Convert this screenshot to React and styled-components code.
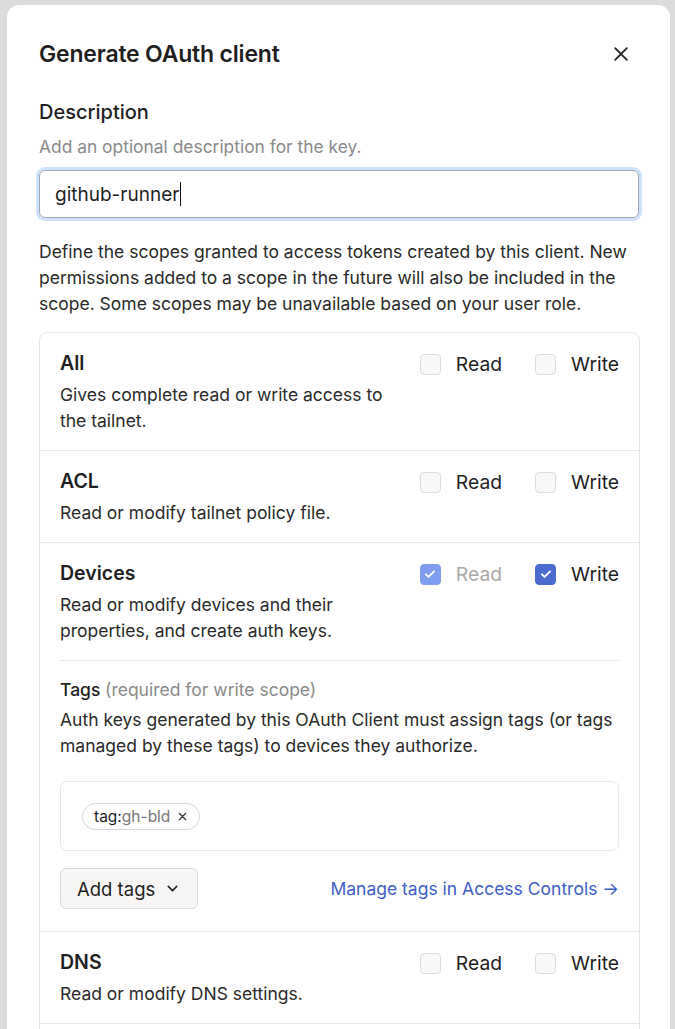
import React from "react";
import styled, { createGlobalStyle } from "styled-components";

const Global = createGlobalStyle`
  html, body {
    margin: 0;
    padding: 0;
    background: #dcdcdc;
    font-family: Inter, "Noto Sans", "Liberation Sans", sans-serif;
    color: #1f1f1f;
    overflow: hidden;
  }
  * { box-sizing: border-box; }
`;

const Page = styled.div`
  height: 1029px;
  overflow: hidden;
  padding: 5px 5px 0 7px;
`;

const Modal = styled.div`
  width: 663px;
  background: #fff;
  border-radius: 12px;
  padding: 30px 31px 0 32px;
`;

const Header = styled.div`
  display: flex;
  justify-content: space-between;
  align-items: center;
  height: 38px;
`;

const Title = styled.h2`
  margin: 0;
  font-size: 23px;
  font-weight: 600;
  letter-spacing: -0.2px;
`;

const Close = styled.button`
  border: 0;
  background: none;
  padding: 0;
  margin-right: 8px;
  display: flex;
  cursor: pointer;
  color: #222;
`;

const Label = styled.div`
  margin-top: 25px;
  font-size: 20px;
  font-weight: 500;
  line-height: 28px;
`;

const Hint = styled.div`
  margin-top: 9px;
  font-size: 17.4px;
  line-height: 24px;
  color: #8a8a8a;
`;

const Input = styled.div`
  margin-top: 11px;
  height: 48px;
  border: 1px solid #9fa6b2;
  border-radius: 6px;
  box-shadow: 0 0 0 3px #cfe2fb;
  padding: 0 15px;
  display: flex;
  align-items: center;
  font-size: 19px;
  color: #1f1f1f;
`;

const Caret = styled.span`
  display: inline-block;
  width: 1px;
  height: 24px;
  background: #111;
  margin-left: 1px;
`;

const Para = styled.p`
  margin: 21px 0 15px;
  font-size: 17.5px;
  line-height: 26px;
  color: #2a2a2a;
`;

const Card = styled.div`
  border: 1px solid #e6e6e6;
  border-radius: 8px 8px 0 0;
  width: 601px;
`;

const Row = styled.div`
  padding: 17px 20px 16px;
  border-top: ${(p) => (p.$first ? "0" : "1px solid #e6e6e6")};
`;

const RowTop = styled.div`
  display: flex;
  justify-content: space-between;
  align-items: flex-start;
`;

const RowText = styled.div`
  max-width: 345px;
`;

const RowTitle = styled.div`
  font-size: 19.5px;
  font-weight: 600;
  line-height: 26px;
`;

const RowDesc = styled.div`
  margin-top: ${(p) => p.$gap || 6}px;
  font-size: 17.5px;
  line-height: 26px;
  color: #2a2a2a;
`;

const Checks = styled.div`
  display: flex;
  gap: 33px;
  padding-top: 2px;
`;

const Check = styled.label`
  display: flex;
  align-items: center;
  gap: 15px;
  font-size: 19.3px;
  line-height: 24px;
  color: ${(p) => (p.$disabled ? "#a9a9a9" : "#1f1f1f")};
`;

const Box = styled.span`
  width: 21px;
  height: 21px;
  border-radius: 4px;
  display: flex;
  align-items: center;
  justify-content: center;
  border: 1px solid ${(p) => (p.$on ? (p.$disabled ? "#7f9ef0" : "#4a6bd0") : "#dcdcdc")};
  background: ${(p) => (p.$on ? (p.$disabled ? "#7f9ef0" : "#4a6bd0") : "#f9f8f7")};
`;

const Tags = styled.div`
  margin-top: 16px;
  border-top: 1px solid #e6e6e6;
  padding-top: 16px;
  padding-bottom: 6px;
`;

const TagsLabel = styled.div`
  font-size: 17.5px;
  font-weight: 500;
  line-height: 26px;
  span {
    font-weight: 400;
    color: #8a8a8a;
  }
`;

const TagBox = styled.div`
  margin-top: 22px;
  height: 70px;
  border: 1px solid #e6e6e6;
  border-radius: 7px;
  padding: 0 21px;
  display: flex;
  align-items: center;
`;

const Chip = styled.span`
  display: inline-flex;
  align-items: center;
  gap: 7px;
  height: 27px;
  padding: 0 11px;
  border: 1px solid #d6d6d6;
  border-radius: 14px;
  font-size: 15.5px;
  color: #1f1f1f;
  em {
    font-style: normal;
    color: #777;
  }
`;

const Actions = styled.div`
  margin-top: 17px;
  display: flex;
  justify-content: space-between;
  align-items: center;
`;

const AddButton = styled.button`
  height: 41px;
  width: 138px;
  border: 1px solid #dadada;
  border-radius: 6px;
  background: #f7f6f5;
  font-family: inherit;
  font-size: 18.5px;
  color: #1f1f1f;
  white-space: nowrap;
  display: flex;
  align-items: center;
  justify-content: space-between;
  padding: 0 16px 0 16px;
`;

const Link = styled.a`
  font-size: 17.5px;
  color: #3d60c6;
  text-decoration: none;
`;

const CheckMark = () => (
  <svg width="14" height="14" viewBox="0 0 24 24" fill="none" stroke="#fff" strokeWidth="3.2" strokeLinecap="round" strokeLinejoin="round">
    <path d="M5 12.5l4.5 4.5L19 7.5" />
  </svg>
);

const Perm = ({ label, on, disabled }) => (
  <Check $disabled={disabled}>
    <Box $on={on} $disabled={disabled}>{on && <CheckMark />}</Box>
    {label}
  </Check>
);

const scopes = [
  { title: "All", desc: "Gives complete read or write access to the tailnet." },
  { title: "ACL", desc: "Read or modify tailnet policy file." },
  { title: "Devices", desc: "Read or modify devices and their properties, and create auth keys.", read: true, write: true, tags: true },
  { title: "DNS", desc: "Read or modify DNS settings." },
  { title: "Routes", desc: "Read or modify subnet routes." },
];

export default function App() {
  return (
    <Page>
      <Global />
      <Modal>
        <Header>
          <Title>Generate OAuth client</Title>
          <Close aria-label="Close">
            <svg width="20" height="20" viewBox="0 0 24 24" fill="none" stroke="currentColor" strokeWidth="2.2" strokeLinecap="round">
              <path d="M5 5l14 14M19 5L5 19" />
            </svg>
          </Close>
        </Header>
        <Label>Description</Label>
        <Hint>Add an optional description for the key.</Hint>
        <Input>
          github-runner<Caret />
        </Input>
        <Para>
          Define the scopes granted to access tokens created by this client. New
          permissions added to a scope in the future will also be included in the
          scope. Some scopes may be unavailable based on your user role.
        </Para>
        <Card>
          {scopes.map((s, i) => (
            <Row key={s.title} $first={i === 0}>
              <RowTop>
                <RowText>
                  <RowTitle>{s.title}</RowTitle>
                  <RowDesc>{s.desc}</RowDesc>
                </RowText>
                <Checks>
                  <Perm label="Read" on={s.read} disabled={s.write} />
                  <Perm label="Write" on={s.write} />
                </Checks>
              </RowTop>
              {s.tags && (
                <Tags>
                  <TagsLabel>
                    Tags <span>(required for write scope)</span>
                  </TagsLabel>
                  <RowDesc $gap={4}>
                    Auth keys generated by this OAuth Client must assign tags (or tags
                    managed by these tags) to devices they authorize.
                  </RowDesc>
                  <TagBox>
                    <Chip>
                      <span>
                        tag:<em>gh-bld</em>
                      </span>
                      <svg width="11" height="11" viewBox="0 0 24 24" fill="none" stroke="#333" strokeWidth="2.6" strokeLinecap="round">
                        <path d="M5 5l14 14M19 5L5 19" />
                      </svg>
                    </Chip>
                  </TagBox>
                  <Actions>
                    <AddButton>
                      Add tags
                      <svg width="17" height="17" viewBox="0 0 24 24" fill="none" stroke="#222" strokeWidth="2.2" strokeLinecap="round" strokeLinejoin="round">
                        <path d="M6 9l6 6 6-6" />
                      </svg>
                    </AddButton>
                    <Link href="#">Manage tags in Access Controls →</Link>
                  </Actions>
                </Tags>
              )}
            </Row>
          ))}
        </Card>
      </Modal>
    </Page>
  );
}
